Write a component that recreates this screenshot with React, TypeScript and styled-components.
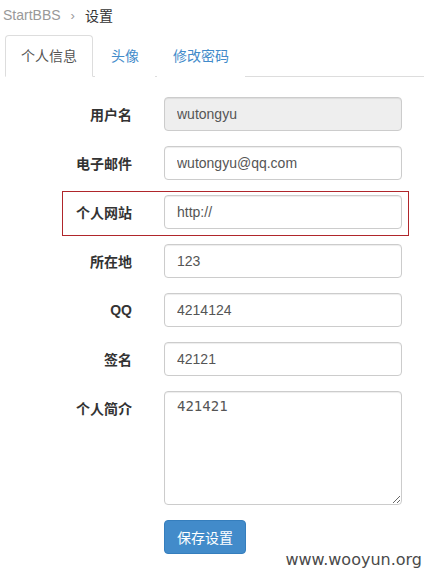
import React from 'react';
import styled, { createGlobalStyle } from 'styled-components';

const GlobalStyle = createGlobalStyle`
  html, body {
    margin: 0;
    padding: 0;
    background: #ffffff;
  }
  body {
    font-family: 'Liberation Sans', 'Noto Sans CJK SC', Arial, sans-serif;
    font-size: 14px;
    color: #333333;
  }
`;

const Page = styled.div`
  position: relative;
  width: 424px;
  height: 570px;
  overflow: hidden;
  padding: 0 0 0 5px;
  box-sizing: border-box;
`;

const Breadcrumb = styled.div`
  display: flex;
  align-items: center;
  height: 30px;
  margin-left: -2px;
  font-size: 14px;
  color: #999999;
`;

const Crumb = styled.span<{ $active?: boolean }>`
  color: ${(p) => (p.$active ? '#333333' : '#999999')};
`;

const Sep = styled.span`
  color: #999999;
  margin: 0 10px;
  font-size: 13px;
`;

const Tabs = styled.div`
  display: flex;
  margin-top: 5px;
  border-bottom: 1px solid #dddddd;
  margin-right: -5px;
`;

const Tab = styled.div<{ $active?: boolean }>`
  padding: 10px 15px;
  line-height: 20px;
  margin-right: 2px;
  margin-bottom: -1px;
  border: 1px solid ${(p) => (p.$active ? '#dddddd' : 'transparent')};
  border-bottom-color: ${(p) => (p.$active ? '#ffffff' : 'transparent')};
  border-radius: 4px 4px 0 0;
  background: #ffffff;
  color: ${(p) => (p.$active ? '#555555' : '#428bca')};
  font-size: 14px;
`;

const Form = styled.div`
  display: flex;
  flex-direction: column;
  gap: 15px;
  margin-top: 20px;
`;

const Row = styled.div<{ $top?: boolean }>`
  position: relative;
  display: grid;
  grid-template-columns: 127px 238px;
  column-gap: 32px;
  align-items: ${(p) => (p.$top ? 'start' : 'center')};
`;

const Label = styled.label<{ $top?: boolean }>`
  text-align: right;
  font-weight: bold;
  font-size: 14px;
  color: #333333;
  padding-top: ${(p) => (p.$top ? '7px' : '0')};
`;

const Input = styled.input`
  box-sizing: border-box;
  width: 238px;
  height: 34px;
  padding: 6px 12px;
  font-family: 'Liberation Sans', 'Noto Sans CJK SC', Arial, sans-serif;
  font-size: 14px;
  color: #555555;
  background: ${(p) => (p.disabled ? '#eeeeee' : '#ffffff')};
  border: 1px solid #cccccc;
  border-radius: 4px;
  box-shadow: inset 0 1px 1px rgba(0, 0, 0, 0.075);
  outline: none;
`;

const TextArea = styled.textarea`
  box-sizing: border-box;
  width: 238px;
  height: 114px;
  padding: 6px 12px;
  font-family: 'DejaVu Sans Mono', monospace;
  font-size: 14px;
  color: #555555;
  border: 1px solid #cccccc;
  border-radius: 4px;
  box-shadow: inset 0 1px 1px rgba(0, 0, 0, 0.075);
  outline: none;
`;

const Highlight = styled.div`
  position: absolute;
  left: 57px;
  top: -4px;
  width: 347px;
  height: 45px;
  box-sizing: border-box;
  border: 1px solid #b0262b;
  pointer-events: none;
`;

const SaveButton = styled.button`
  box-sizing: border-box;
  width: 82px;
  height: 34px;
  padding: 6px 12px;
  font-family: 'Liberation Sans', 'Noto Sans CJK SC', Arial, sans-serif;
  font-size: 14px;
  color: #ffffff;
  background: #428bca;
  border: 1px solid #357ebd;
  border-radius: 4px;
`;

const Watermark = styled.div`
  position: absolute;
  right: 2px;
  bottom: 1px;
  font-family: 'DejaVu Sans', sans-serif;
  font-size: 16px;
  color: #4a4a4a;
`;

const fields = [
  { label: '用户名', value: 'wutongyu', disabled: true },
  { label: '电子邮件', value: 'wutongyu@qq.com' },
  { label: '个人网站', value: 'http://', mark: true },
  { label: '所在地', value: '123' },
  { label: 'QQ', value: '4214124' },
  { label: '签名', value: '42121' },
];

const App = () => {
  return (
    <Page>
      <GlobalStyle />
      <Breadcrumb>
        <Crumb>StartBBS</Crumb>
        <Sep>›</Sep>
        <Crumb $active>设置</Crumb>
      </Breadcrumb>
      <Tabs>
        <Tab $active>个人信息</Tab>
        <Tab>头像</Tab>
        <Tab>修改密码</Tab>
      </Tabs>
      <Form>
        {fields.map((f) => (
          <Row key={f.label}>
            {f.mark && <Highlight />}
            <Label>{f.label}</Label>
            <Input defaultValue={f.value} disabled={f.disabled} />
          </Row>
        ))}
        <Row $top>
          <Label $top>个人简介</Label>
          <TextArea defaultValue="421421" />
        </Row>
        <Row>
          <span />
          <SaveButton>保存设置</SaveButton>
        </Row>
      </Form>
      <Watermark>www.wooyun.org</Watermark>
    </Page>
  );
};

export default App;
